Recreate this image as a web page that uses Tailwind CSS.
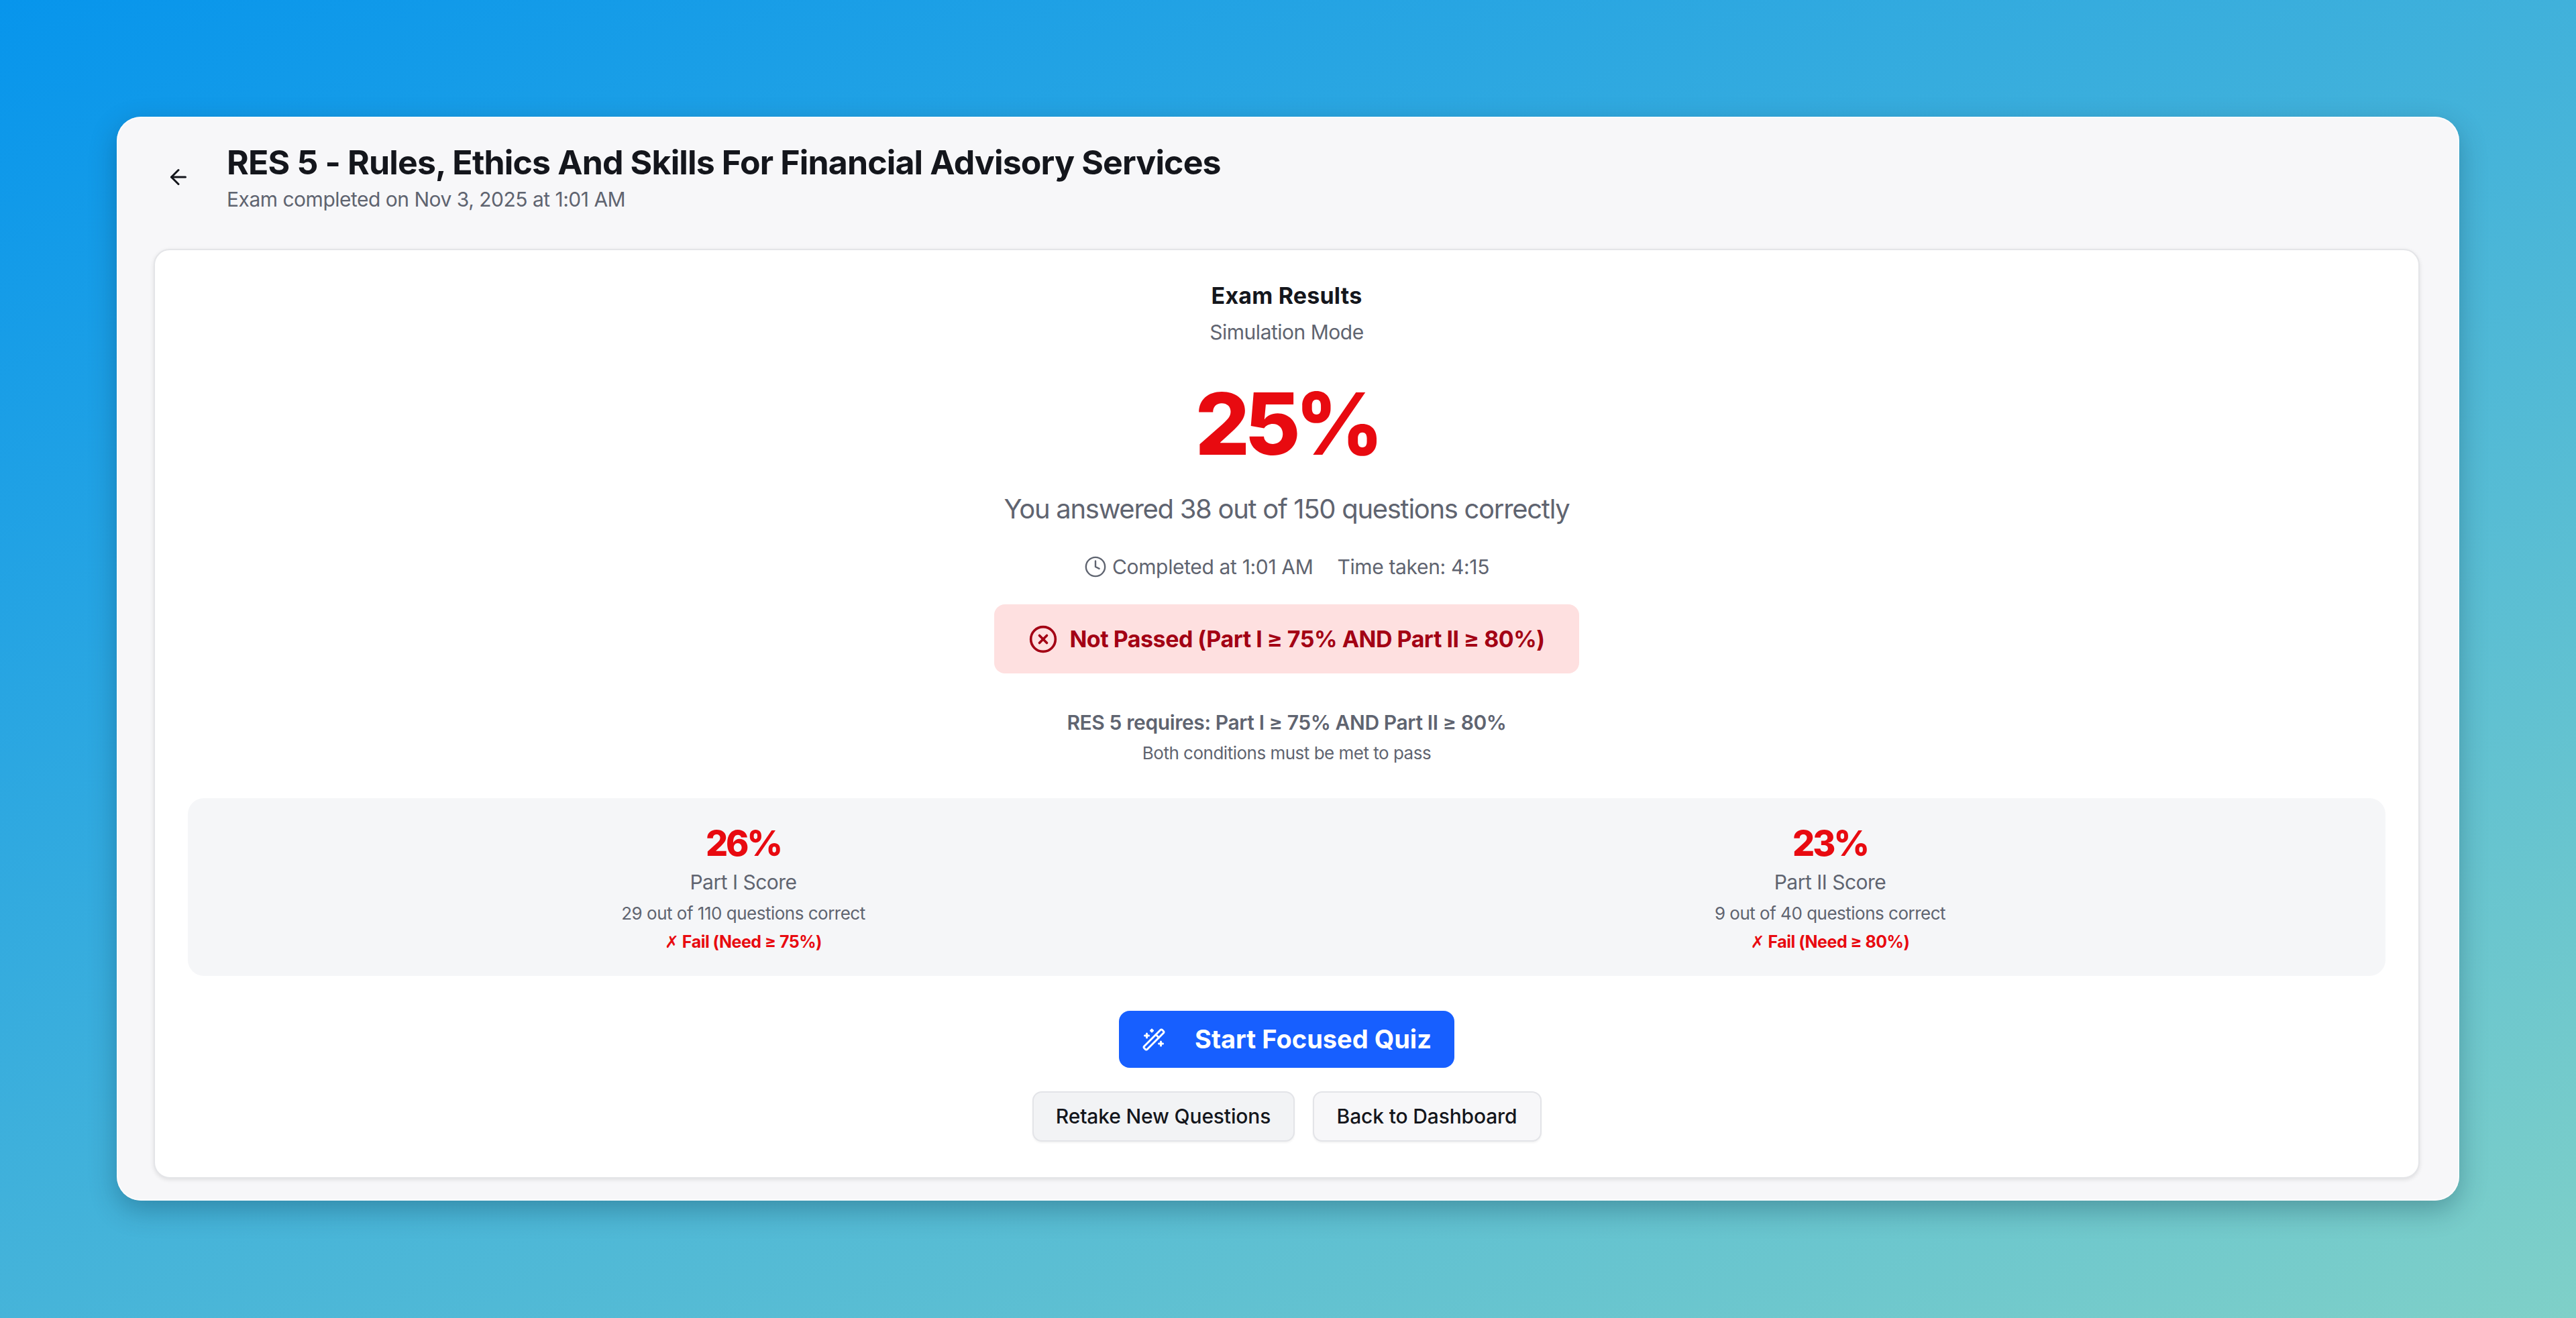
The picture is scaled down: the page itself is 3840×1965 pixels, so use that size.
<!DOCTYPE html>
<html lang="en">
<head>
<meta charset="utf-8">
<title>Exam Results</title>
<script src="https://cdn.jsdelivr.net/npm/@tailwindcss/browser@4"></script>
</head>
<body class="h-[1965px] overflow-hidden bg-[linear-gradient(155deg,#0795ec,#7fd0c8)] font-['Inter',sans-serif] pt-[174px] pl-[174px]">
    <div class="w-[3492px] h-[1616px] rounded-[36px] bg-[#f7f7f9] pl-[55px] pr-[59px] pt-[38px] shadow-[0_14px_40px_rgba(0,40,60,0.3),inset_0_0_0_2px_rgba(255,255,255,0.6)]">
        <div class="flex items-center mb-[56px]">
            <button type="button" class="ml-[19px] mr-[54px] w-[36px] h-[36px] text-[#14161c]">
                <svg xmlns="http://www.w3.org/2000/svg" class="w-[36px] h-[36px]" viewBox="0 0 24 24" fill="none" stroke="currentColor" stroke-width="2" stroke-linecap="round" stroke-linejoin="round"><path d="m12 19-7-7 7-7"/><path d="M19 12H5"/></svg>
            </button>
            <div>
                <h1 class="text-[50px] leading-[60px] font-bold text-[#14161c] tracking-[-0.85px]">RES 5 - Rules, Ethics And Skills For Financial Advisory Services</h1>
                <p class="mt-[7px] text-[30px] leading-[36px] text-[#5f6470] tracking-[-0.5px]">Exam completed on Nov 3, 2025 at 1:01 AM</p>
            </div>
        </div>

        <div class="h-[1386px] rounded-[24px] bg-white border-2 border-[#e4e5e8] shadow-[0_2px_6px_rgba(0,0,0,0.1)] pt-[48px] px-[49px] text-center">
            <h2 class="text-[34px] leading-[40px] font-bold text-[#14161c] tracking-[0.2px]">Exam Results</h2>
            <p class="mt-[16px] text-[30px] leading-[36px] text-[#5f6470] tracking-[-0.5px]">Simulation Mode</p>
            <div class="mt-[54px] text-[128px] leading-[130px] font-extrabold text-[#e80a10] tracking-[-8px]">25%</div>
            <p class="mt-[38px] text-[40px] leading-[48px] text-[#5f6470] tracking-[-1.3px]">You answered 38 out of 150 questions correctly</p>
            <div class="mt-[44px] flex justify-center items-center text-[30px] leading-[36px] text-[#5f6470] tracking-[-0.35px]">
                <svg xmlns="http://www.w3.org/2000/svg" class="w-[34px] h-[34px] mr-[8px]" viewBox="0 0 24 24" fill="none" stroke="currentColor" stroke-width="1.7" stroke-linecap="round" stroke-linejoin="round"><circle cx="12" cy="12" r="10"/><polyline points="12 6 12 12 16 14"/></svg>
                <span>Completed at 1:01 AM</span>
                <span class="ml-[36px]">Time taken: 4:15</span>
            </div>
            <div class="mt-[38px] mx-auto flex items-center justify-center w-[872px] h-[103px] rounded-[16px] bg-[#fee0e0] text-[34px] font-bold text-[#a30014] tracking-[-0.5px]">
                <svg xmlns="http://www.w3.org/2000/svg" class="w-[44px] h-[44px] mr-[17px]" viewBox="0 0 24 24" fill="none" stroke="currentColor" stroke-width="2" stroke-linecap="round" stroke-linejoin="round"><circle cx="12" cy="12" r="10"/><path d="m15 9-6 6"/><path d="m9 9 6 6"/></svg>
                <span>Not Passed (Part I ≥ 75% AND Part II ≥ 80%)</span>
            </div>
            <p class="mt-[55px] text-[30px] leading-[36px] font-semibold text-[#5f6470] tracking-[-0.4px]">RES 5 requires: Part I ≥ 75% AND Part II ≥ 80%</p>
            <p class="mt-[12px] text-[26px] leading-[32px] text-[#5f6470] tracking-[-0.5px]">Both conditions must be met to pass</p>

            <div class="mt-[51px] grid grid-cols-2 gap-[28px] h-[265px] rounded-[24px] bg-[#f5f6f8] pt-[38px] px-[32px]">
                <div>
                    <div class="text-[52px] leading-[60px] font-extrabold text-[#e80a10] tracking-[-3px]">26%</div>
                    <div class="mt-[9px] text-[30px] leading-[36px] text-[#5f6470] tracking-[-0.5px]">Part I Score</div>
                    <div class="mt-[13px] text-[26px] leading-[32px] text-[#5f6470] tracking-[-0.5px]">29 out of 110 questions correct</div>
                    <div class="mt-[10px] text-[25px] leading-[32px] font-bold text-[#e80a10] tracking-[-0.5px]"><span class="font-['DejaVu_Sans']">✗</span> Fail (Need ≥ 75%)</div>
                </div>
                <div>
                    <div class="text-[52px] leading-[60px] font-extrabold text-[#e80a10] tracking-[-3px]">23%</div>
                    <div class="mt-[9px] text-[30px] leading-[36px] text-[#5f6470] tracking-[-0.5px]">Part II Score</div>
                    <div class="mt-[13px] text-[26px] leading-[32px] text-[#5f6470] tracking-[-0.5px]">9 out of 40 questions correct</div>
                    <div class="mt-[10px] text-[25px] leading-[32px] font-bold text-[#e80a10] tracking-[-0.5px]"><span class="font-['DejaVu_Sans']">✗</span> Fail (Need ≥ 80%)</div>
                </div>
            </div>

            <button type="button" class="mt-[52px] mx-auto flex items-center justify-center w-[500px] h-[85px] rounded-[16px] bg-[#175fff] text-[38px] font-bold text-white">
                <svg xmlns="http://www.w3.org/2000/svg" class="w-[36px] h-[36px] mr-[43px]" viewBox="0 0 24 24" fill="none" stroke="currentColor" stroke-width="2" stroke-linecap="round" stroke-linejoin="round"><path d="m21.64 3.64-1.28-1.28a1.21 1.21 0 0 0-1.72 0L2.36 18.64a1.21 1.21 0 0 0 0 1.72l1.28 1.28a1.2 1.2 0 0 0 1.72 0L21.64 5.36a1.2 1.2 0 0 0 0-1.72"/><path d="m14 7 3 3"/><path d="M5 6v4"/><path d="M19 14v4"/><path d="M10 2v2"/><path d="M7 8H3"/><path d="M21 16h-4"/><path d="M11 3H9"/></svg>
                Start Focused Quiz
            </button>
            <div class="mt-[35px] flex justify-center gap-[27px]">
                <button type="button" class="w-[391px] h-[75px] rounded-[14px] border-2 border-[#e3e4e8] bg-[#f2f3f5] shadow-[0_2px_3px_rgba(0,0,0,0.05)] text-[30px] font-medium text-[#14161c] tracking-[-0.15px]">Retake New Questions</button>
                <button type="button" class="w-[341px] h-[75px] rounded-[14px] border-2 border-[#e3e4e8] bg-[#f7f7f9] shadow-[0_2px_3px_rgba(0,0,0,0.05)] text-[30px] font-medium text-[#14161c] tracking-[-0.15px]">Back to Dashboard</button>
            </div>
        </div>
    </div>
</body>
</html>
